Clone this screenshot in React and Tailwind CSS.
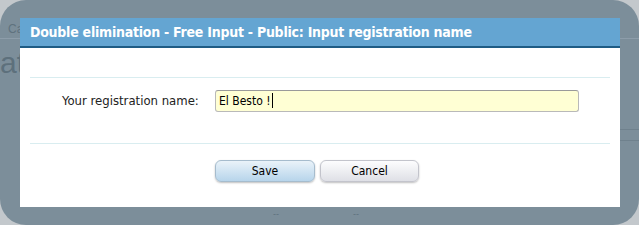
export default function App() {
  return (
    <div className="w-[639px] h-[225px] bg-[#c3c8cc] overflow-hidden">
      <div className="relative w-[639px] h-[225px] rounded-[26px] bg-[#7c8e9a] overflow-hidden font-['Liberation_Sans',sans-serif]">
        {/* page behind the overlay */}
        <div className="absolute left-0 right-0 top-[38px] h-px bg-[#8d9daa]" />
        <div className="absolute left-[8px] top-[20px] text-[12px] text-[#5f727e]">Ca</div>
        <div className="absolute left-0 top-[48px] text-[30px] leading-none text-[#5d707c]">at</div>
        <div className="absolute left-[620px] right-0 top-[129px] h-px bg-[#6f818d]" />
        <div className="absolute left-[620px] right-0 top-[140px] h-px bg-[#6f818d]" />
        <div className="absolute left-[273px] top-[208px] text-[9px] text-[#5d707c]">--</div>
        <div className="absolute left-[353px] top-[208px] text-[9px] text-[#5d707c]">--</div>

        {/* dialog */}
        <div className="absolute left-[20px] top-[18px] w-[600px] h-[189px] bg-white flex flex-col">
          <div className="h-[30px] bg-[#64a5d2] border-b-2 border-[#1f5c84] flex items-center pl-[10px]">
            <span className="text-white font-bold text-[14px] font-['DejaVu_Sans_Condensed',sans-serif] tracking-[-0.25px]">
              Double elimination - Free Input - Public: Input registration name
            </span>
          </div>
          <div className="mx-[10px] mt-[29px] h-px bg-[#d9edf0]" />
          <div className="flex items-center h-[44px] pt-px">
            <label className="ml-[42px] w-[153px] text-[13px] text-[#222] font-['DejaVu_Sans_Condensed',sans-serif]">
              Your registration name:
            </label>
            <div className="w-[364px] h-[22px] rounded-[3px] border border-[#b9b9b9] border-t-[#9a9a9a] bg-[#ffffd4] flex items-center pl-[3px] text-[12px] text-black font-['DejaVu_Sans_Condensed',sans-serif]">
              El Besto !<span className="ml-px w-px h-[15px] bg-black" />
            </div>
          </div>
          <div className="mx-[10px] mt-[21px] h-px bg-[#d9edf0]" />
          <div className="flex gap-[5px] ml-[195px] mt-[16px]">
            <button className="w-[100px] h-[22px] rounded-[6px] border border-[#a6bccd] bg-gradient-to-b from-[#eaf3f9] to-[#b7d5eb] shadow-[0_1px_2px_rgba(0,0,0,0.25)] text-[12px] text-black font-['DejaVu_Sans_Condensed',sans-serif]">
              Save
            </button>
            <button className="w-[99px] h-[22px] rounded-[6px] border border-[#c3c4cc] bg-gradient-to-b from-[#fdfdfe] to-[#dfe0e6] shadow-[0_1px_2px_rgba(0,0,0,0.25)] text-[12px] text-black font-['DejaVu_Sans_Condensed',sans-serif]">
              Cancel
            </button>
          </div>
        </div>
      </div>
    </div>
  )
}
